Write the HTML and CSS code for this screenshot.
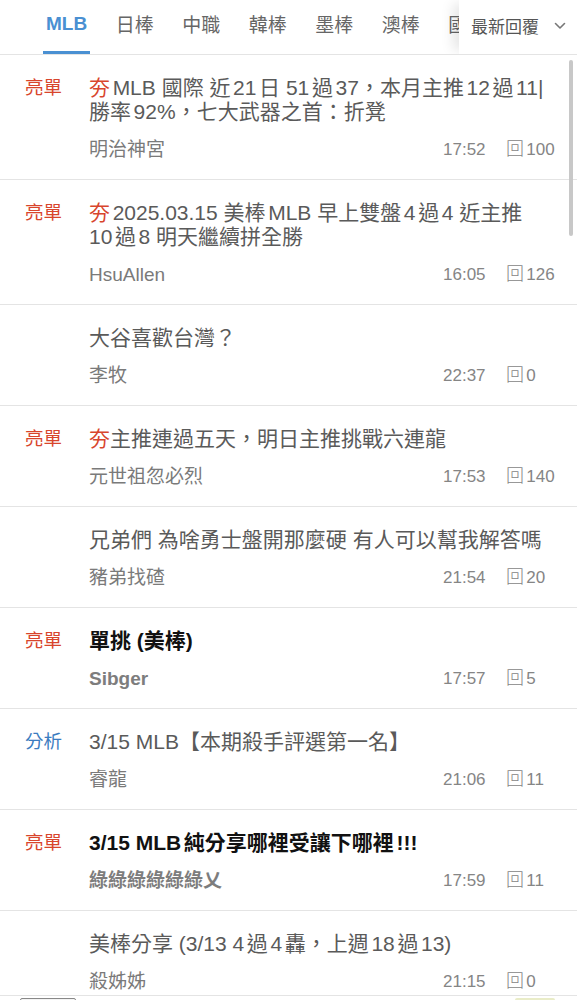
FILE: index.html
```html
<!DOCTYPE html>
<html lang="zh-Hant">
<head>
<meta charset="utf-8">
<title>MLB 討論</title>
<link rel="stylesheet" href="styles.css">
</head>
<body>
<header class="nav">
  <nav class="tabs">
    <a class="tab active">MLB</a>
    <a class="tab">日棒</a>
    <a class="tab">中職</a>
    <a class="tab">韓棒</a>
    <a class="tab">墨棒</a>
    <a class="tab">澳棒</a>
    <a class="tab">國際</a>
  </nav>
  <div class="sort">
    <span>最新回覆</span>
    <svg class="chev" width="12" height="8" viewBox="0 0 12 8"><path d="M1.5 1.5 L6 6 L10.5 1.5" fill="none" stroke="#777" stroke-width="1.6" stroke-linecap="round" stroke-linejoin="round"/></svg>
  </div>
</header>

<main class="list">
  <article class="item">
    <div class="tag red">亮單</div>
    <div class="body">
      <div class="title"><span class="hot">夯</span>MLB 國際 近21日 51過37，本月主推12過11|勝率92%，七大武器之首：折凳</div>
      <div class="meta"><span class="author">明治神宮</span><span class="time">17:52</span><span class="reply"><i>回</i>100</span></div>
    </div>
  </article>
  <article class="item">
    <div class="tag red">亮單</div>
    <div class="body">
      <div class="title"><span class="hot">夯</span>2025.03.15 美棒MLB 早上雙盤4過4 近主推 10過8 明天繼續拼全勝</div>
      <div class="meta"><span class="author">HsuAllen</span><span class="time">16:05</span><span class="reply"><i>回</i>126</span></div>
    </div>
  </article>
  <article class="item">
    <div class="tag"></div>
    <div class="body">
      <div class="title">大谷喜歡台灣？</div>
      <div class="meta"><span class="author">李牧</span><span class="time">22:37</span><span class="reply"><i>回</i>0</span></div>
    </div>
  </article>
  <article class="item">
    <div class="tag red">亮單</div>
    <div class="body">
      <div class="title"><span class="hot">夯</span>主推連過五天，明日主推挑戰六連龍</div>
      <div class="meta"><span class="author">元世祖忽必烈</span><span class="time">17:53</span><span class="reply"><i>回</i>140</span></div>
    </div>
  </article>
  <article class="item">
    <div class="tag"></div>
    <div class="body">
      <div class="title">兄弟們 為啥勇士盤開那麼硬 有人可以幫我解答嗎</div>
      <div class="meta"><span class="author">豬弟找碴</span><span class="time">21:54</span><span class="reply"><i>回</i>20</span></div>
    </div>
  </article>
  <article class="item strong">
    <div class="tag red">亮單</div>
    <div class="body">
      <div class="title">單挑 (美棒)</div>
      <div class="meta"><span class="author">Sibger</span><span class="time">17:57</span><span class="reply"><i>回</i>5</span></div>
    </div>
  </article>
  <article class="item">
    <div class="tag blue">分析</div>
    <div class="body">
      <div class="title">3/15 MLB【本期殺手評選第一名】</div>
      <div class="meta"><span class="author">睿龍</span><span class="time">21:06</span><span class="reply"><i>回</i>11</span></div>
    </div>
  </article>
  <article class="item strong">
    <div class="tag red">亮單</div>
    <div class="body">
      <div class="title">3/15 MLB純分享哪裡受讓下哪裡!!!</div>
      <div class="meta"><span class="author">綠綠綠綠綠綠乂</span><span class="time">17:59</span><span class="reply"><i>回</i>11</span></div>
    </div>
  </article>
  <article class="item">
    <div class="tag"></div>
    <div class="body">
      <div class="title">美棒分享 (3/13 4過4轟，上週18過13)</div>
      <div class="meta"><span class="author">殺姊姊</span><span class="time">21:15</span><span class="reply"><i>回</i>0</span></div>
    </div>
  </article>
</main>

<div class="banner">
  <span class="thumb left"></span>
  <span class="thumb right"></span>
</div>
<div class="scrollbar"></div>
</body>
</html>
```

FILE: styles.css
```css
* { box-sizing: border-box; }

html, body {
  margin: 0;
  padding: 0;
  background: #fff;
}

body {
  font-family: "Liberation Sans", "Noto Sans CJK TC", sans-serif;
  color: #555;
  overflow: hidden;
  text-autospace: normal;
}

/* ---------- top nav ---------- */
.nav {
  position: relative;
  height: 55px;
  border-bottom: 1px solid #e4e4e4;
  overflow: hidden;
}

.tabs {
  display: flex;
  gap: 22.5px;
  padding-left: 43px;
  height: 54px;
  white-space: nowrap;
}

.tab {
  display: flex;
  align-items: center;
  padding: 0 3px 4px;
  height: 54px;
  font-size: 19px;
  color: #666;
  border-bottom: 3px solid transparent;
}

.tab.active {
  color: #4a90d2;
  font-weight: 700;
  font-size: 19px;
  border-bottom-color: #4a90d2;
}

.sort {
  position: absolute;
  top: 0;
  right: 0;
  height: 54px;
  width: 118px;
  padding: 0 0 4px 12px;
  display: flex;
  align-items: center;
  gap: 15px;
  background: #fff;
  font-size: 17px;
  color: #555;
  box-shadow: -10px 0 12px -4px rgba(0, 0, 0, 0.10);
}

.chev { margin-top: 2px; }

/* ---------- list ---------- */
.item {
  display: flex;
  padding: 21px 11px 19px 25px;
  border-bottom: 1px solid #e4e4e4;
}

.tag {
  flex: 0 0 64px;
  font-size: 18.5px;
  line-height: 24px;
}

.tag.red { color: #d8452c; }
.tag.blue { color: #3b7cc0; }

.body {
  flex: 1;
  min-width: 0;
}

.title {
  margin-right: 18px;
  font-size: 21px;
  line-height: 24px;
  color: #5a5a5a;
}

.hot { color: #d8452c; }

.meta {
  display: grid;
  grid-template-columns: 1fr 63px 60px;
  align-items: center;
  height: 22px;
  margin-top: 14px;
  font-size: 17px;
  line-height: 22px;
  color: #7a7a7a;
}

.author { font-size: 19px; }

.time { color: #858585; }

.reply { color: #858585; }

.reply i {
  font-style: normal;
  font-weight: 300;
  font-size: 18px;
  margin-right: 0;
}

.item.strong .title {
  color: #111;
  font-weight: 700;
}

.item.strong .author {
  font-weight: 700;
  color: #7d7d7d;
}

/* ---------- overlays ---------- */
.banner {
  position: fixed;
  left: 0;
  right: 0;
  top: 995px;
  height: 40px;
  background: #fff;
  border-top: 1px solid #e4e4e4;
}

.thumb {
  position: absolute;
  top: 2px;
  height: 30px;
  border-radius: 2px;
}

.thumb.left {
  left: 20px;
  width: 56px;
  border: 1px solid #888;
  background: #f4f4f4;
}

.thumb.right {
  left: 515px;
  width: 40px;
  background: #e9ecc8;
}

.scrollbar {
  position: fixed;
  top: 60px;
  right: 4px;
  width: 4px;
  height: 176px;
  border-radius: 2px;
  background: #c8c8c8;
}
```
